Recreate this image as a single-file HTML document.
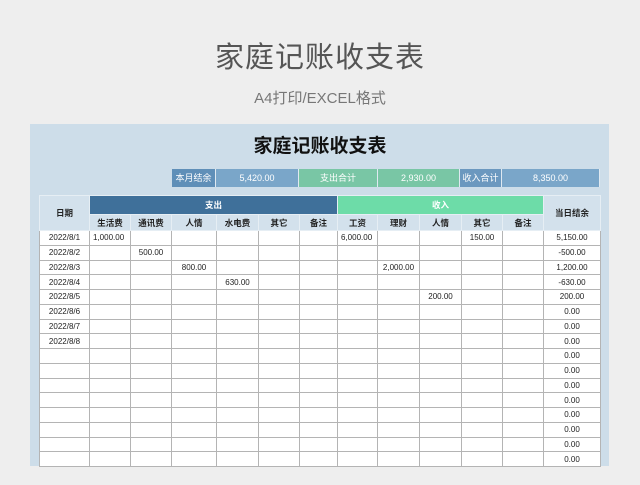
<!DOCTYPE html>
<html><head><meta charset="utf-8"><style>
*{margin:0;padding:0;box-sizing:border-box}
body{width:640px;height:485px;background:#eeeeee;font-family:"Liberation Sans","Noto Sans CJK SC",sans-serif;position:relative;overflow:hidden}
.t1{position:absolute;top:34px;left:0;width:640px;text-align:center;font-size:29px;color:#555;letter-spacing:1px}
.t2{position:absolute;top:87px;left:0;width:640px;text-align:center;font-size:15px;color:#777}
.panel{position:absolute;left:30px;top:124px;width:579px;height:342px;background:#cddde9}
.pt{position:absolute;top:131px;left:0;width:640px;text-align:center;font-size:19px;font-weight:bold;color:#111}
.sum{position:absolute;top:169px;height:18px;font-size:9px;color:#fff;text-align:center;line-height:18px;border-right:1px solid #dfe9f1}
table{position:absolute;left:39px;top:195px;border-collapse:collapse;table-layout:fixed;font-size:8px;color:#222}
td{border:1px solid #b4b4b4;height:14.75px;padding:0 3px;white-space:nowrap;overflow:hidden}
tbody td{background:#fff}
thead td{background:#d3e1ec;text-align:center;font-weight:bold;font-size:8.5px;border-color:#e6eef4}
.r{text-align:right}.c{text-align:center}
</style></head><body>
<div class="t1">家庭记账收支表</div>
<div class="t2">A4打印/EXCEL格式</div>
<div class="panel"></div>
<div class="pt">家庭记账收支表</div>
<div class="sum" style="left:172px;width:44px;background:#5f8fb8">本月结余</div>
<div class="sum" style="left:216px;width:83px;background:#7aa6c9">5,420.00</div>
<div class="sum" style="left:299px;width:79px;background:#79c6a5">支出合计</div>
<div class="sum" style="left:378px;width:82px;background:#79c6a5">2,930.00</div>
<div class="sum" style="left:460px;width:42px;background:#6b98bf">收入合计</div>
<div class="sum" style="left:502px;width:98px;background:#7aa6c9">8,350.00</div>
<table>
<colgroup><col style="width:50px"><col style="width:41px"><col style="width:41px"><col style="width:45px"><col style="width:42px"><col style="width:41px"><col style="width:38px"><col style="width:40px"><col style="width:42px"><col style="width:42px"><col style="width:41px"><col style="width:41px"><col style="width:57px"></colgroup>
<thead>
<tr><td rowspan="2" style="height:35px">日期</td><td colspan="6" style="background:#3f709a;color:#fff;height:19px">支出</td><td colspan="5" style="background:#6ddca8;color:#fff">收入</td><td rowspan="2">当日结余</td></tr>
<tr><td style="height:16px">生活费</td><td>通讯费</td><td>人情</td><td>水电费</td><td>其它</td><td>备注</td><td>工资</td><td>理财</td><td>人情</td><td>其它</td><td>备注</td></tr>
</thead>
<tbody>
<tr><td class="c">2022/8/1</td><td>1,000.00</td><td></td><td></td><td></td><td></td><td></td><td>6,000.00</td><td></td><td></td><td class="c">150.00</td><td></td><td class="c">5,150.00</td></tr>
<tr><td class="c">2022/8/2</td><td></td><td class="c">500.00</td><td></td><td></td><td></td><td></td><td></td><td></td><td></td><td></td><td></td><td class="c">-500.00</td></tr>
<tr><td class="c">2022/8/3</td><td></td><td></td><td class="c">800.00</td><td></td><td></td><td></td><td></td><td class="c">2,000.00</td><td></td><td></td><td></td><td class="c">1,200.00</td></tr>
<tr><td class="c">2022/8/4</td><td></td><td></td><td></td><td class="c">630.00</td><td></td><td></td><td></td><td></td><td></td><td></td><td></td><td class="c">-630.00</td></tr>
<tr><td class="c">2022/8/5</td><td></td><td></td><td></td><td></td><td></td><td></td><td></td><td></td><td class="c">200.00</td><td></td><td></td><td class="c">200.00</td></tr>
<tr><td class="c">2022/8/6</td><td></td><td></td><td></td><td></td><td></td><td></td><td></td><td></td><td></td><td></td><td></td><td class="c">0.00</td></tr>
<tr><td class="c">2022/8/7</td><td></td><td></td><td></td><td></td><td></td><td></td><td></td><td></td><td></td><td></td><td></td><td class="c">0.00</td></tr>
<tr><td class="c">2022/8/8</td><td></td><td></td><td></td><td></td><td></td><td></td><td></td><td></td><td></td><td></td><td></td><td class="c">0.00</td></tr>
<tr><td></td><td></td><td></td><td></td><td></td><td></td><td></td><td></td><td></td><td></td><td></td><td></td><td class="c">0.00</td></tr>
<tr><td></td><td></td><td></td><td></td><td></td><td></td><td></td><td></td><td></td><td></td><td></td><td></td><td class="c">0.00</td></tr>
<tr><td></td><td></td><td></td><td></td><td></td><td></td><td></td><td></td><td></td><td></td><td></td><td></td><td class="c">0.00</td></tr>
<tr><td></td><td></td><td></td><td></td><td></td><td></td><td></td><td></td><td></td><td></td><td></td><td></td><td class="c">0.00</td></tr>
<tr><td></td><td></td><td></td><td></td><td></td><td></td><td></td><td></td><td></td><td></td><td></td><td></td><td class="c">0.00</td></tr>
<tr><td></td><td></td><td></td><td></td><td></td><td></td><td></td><td></td><td></td><td></td><td></td><td></td><td class="c">0.00</td></tr>
<tr><td></td><td></td><td></td><td></td><td></td><td></td><td></td><td></td><td></td><td></td><td></td><td></td><td class="c">0.00</td></tr>
<tr><td></td><td></td><td></td><td></td><td></td><td></td><td></td><td></td><td></td><td></td><td></td><td></td><td class="c">0.00</td></tr>
</tbody>
</table>
</body></html>
